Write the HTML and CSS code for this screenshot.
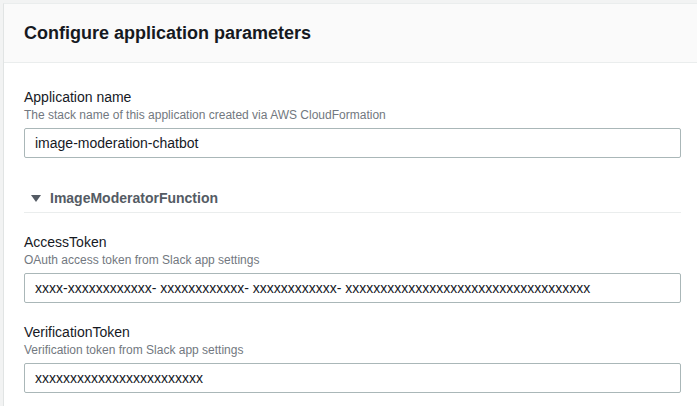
FILE: index.html
```html
<!DOCTYPE html>
<html>
<head>
<meta charset="utf-8">
<link rel="stylesheet" href="styles.css">
</head>
<body>
<div class="panel">
  <div class="panel-header">
    <h2 class="panel-title">Configure application parameters</h2>
  </div>
  <div class="panel-body">
    <div class="field">
      <div class="label">Application name</div>
      <div class="desc">The stack name of this application created via AWS CloudFormation</div>
      <div class="input">image-moderation-chatbot</div>
    </div>
    <div class="group">
      <span class="caret"></span>
      <span class="group-title">ImageModeratorFunction</span>
    </div>
    <div class="field">
      <div class="label">AccessToken</div>
      <div class="desc">OAuth access token from Slack app settings</div>
      <div class="input">xxxx-xxxxxxxxxxxx- xxxxxxxxxxxx- xxxxxxxxxxxx- xxxxxxxxxxxxxxxxxxxxxxxxxxxxxxxxxxx</div>
    </div>
    <div class="field">
      <div class="label">VerificationToken</div>
      <div class="desc">Verification token from Slack app settings</div>
      <div class="input">xxxxxxxxxxxxxxxxxxxxxxxx</div>
    </div>
  </div>
</div>
</body>
</html>
```
FILE: styles.css
```css
html, body {
  margin: 0;
  padding: 0;
  background: #f2f3f3;
  font-family: "Liberation Sans", Arial, sans-serif;
  color: #16191f;
}
.panel {
  margin: 3px 0 0 3px;
  background: #ffffff;
  border-left: 1px solid #e1e4e4;
  border-top: 1px solid #eaeded;
  height: 410px;
}
.panel-header {
  background: #fafafa;
  border-bottom: 1px solid #eaeded;
  height: 58px;
  display: flex;
  align-items: center;
  padding-left: 20px;
}
.panel-title {
  margin: 0;
  font-size: 18px;
  line-height: 22px;
  font-weight: 700;
  color: #16191f;
}
.panel-body {
  padding: 24px 16px 0 20px;
}
.field {
  display: flex;
  flex-direction: column;
}
.label {
  font-size: 14px;
  line-height: 20px;
  color: #16191f;
}
.desc {
  font-size: 12px;
  line-height: 16px;
  color: #727880;
  margin-bottom: 5px;
}
.input {
  height: 28px;
  border: 1px solid #aab7b8;
  border-radius: 2px;
  font-size: 14px;
  line-height: 28px;
  padding-left: 10px;
  white-space: nowrap;
  overflow: hidden;
}
.group {
  display: flex;
  align-items: center;
  gap: 9px;
  margin-top: 32px;
  padding: 0 0 6px 7px;
  border-bottom: 1px solid #eaeded;
  margin-bottom: 19px;
  line-height: 16px;
}
.caret {
  width: 0;
  height: 0;
  border-left: 5px solid transparent;
  border-right: 5px solid transparent;
  border-top: 7px solid #545b64;
}
.group-title {
  font-size: 14px;
  font-weight: 700;
  color: #545b64;
}
.field + .field {
  margin-top: 19px;
}
```
